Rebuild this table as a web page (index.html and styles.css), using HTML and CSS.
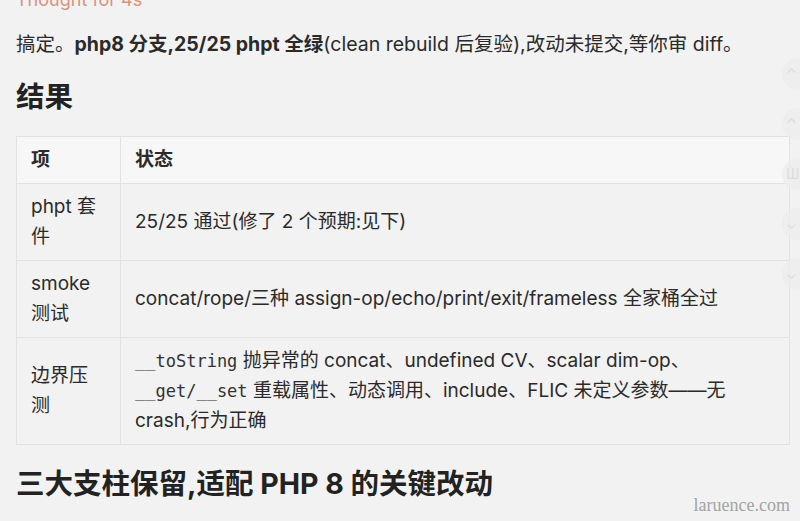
FILE: index.html
```html
<!DOCTYPE html>
<html lang="zh-CN">
<head>
    <meta charset="utf-8">
    <title>结果</title>
    <link rel="stylesheet" href="styles.css">
</head>
<body>
    <div class="chat">
        <div class="thought">Thought for 4s</div>
        <p class="summary">搞定。<b>php8 分支,25/25 phpt 全绿</b>(clean rebuild 后复验),改动未提交,等你审 diff。</p>

        <h2 class="title">结果</h2>

        <table class="result">
            <thead>
                <tr>
                    <th class="col-item">项</th>
                    <th>状态</th>
                </tr>
            </thead>
            <tbody>
                <tr>
                    <td class="col-item">phpt 套件</td>
                    <td>25/25 通过(修了 2 个预期:见下)</td>
                </tr>
                <tr>
                    <td class="col-item">smoke 测试</td>
                    <td>concat/rope/三种 assign-op/echo/print/exit/frameless 全家桶全过</td>
                </tr>
                <tr>
                    <td class="col-item">边界压测</td>
                    <td><code>__toString</code> 抛异常的 concat、undefined CV、scalar dim-op、<code>__get/__set</code> 重载属性、动态调用、include、FLIC 未定义参数——无 crash,行为正确</td>
                </tr>
            </tbody>
        </table>

        <h2 class="title title-next">三大支柱保留,适配 PHP 8 的关键改动</h2>
    </div>

    <!-- faint floating buttons at the right edge -->
    <div class="side-tools">
        <span class="tool">⌃</span>
        <span class="tool">⌃</span>
        <span class="tool">Ш</span>
        <span class="tool">⌄</span>
        <span class="tool">⌄</span>
    </div>

    <div class="watermark">laruence.com</div>
</body>
</html>
```

FILE: styles.css
```css
body {
    margin: 0;
    background: #f2f2f2;
    color: #2a2a2a;
    font-family: Inter, "Noto Sans CJK SC", sans-serif;
    overflow: hidden;
}

.chat {
    padding: 0 10px 0 16px;
}

.thought {
    margin-top: -10px;
    font-size: 18px;
    line-height: 20px;
    color: #dc917a;
}

.summary {
    margin: 19px 0 0;
    font-size: 19.5px;
    line-height: 30px;
}

.summary b {
    font-weight: 700;
}

.title {
    margin: 20px 0 0;
    font-size: 28.5px;
    line-height: 36px;
    font-weight: 700;
    color: #222;
}

.title-next {
    margin-top: 21px;
}

table.result {
    width: 100%;
    margin-top: 21px;
    border-collapse: collapse;
    font-size: 19px;
    line-height: 30px;
}

.result th,
.result td {
    border: 1px solid #e2e2e2;
    padding: 8px 14px;
    text-align: left;
    vertical-align: middle;
}

.result th {
    background: #f7f7f7;
    font-weight: 700;
}

.result .col-item {
    width: 67px;
    padding-right: 22px;
}

.result code {
    font-family: "DejaVu Sans Mono", monospace;
    font-size: 17px;
    color: #333;
}

.side-tools {
    position: absolute;
    top: 58px;
    right: -14px;
    display: flex;
    flex-direction: column;
    gap: 18px;
}

.tool {
    width: 32px;
    height: 32px;
    border-radius: 50%;
    background: rgba(236, 236, 236, 0.8);
    color: #dcdcdc;
    font-size: 14px;
    line-height: 32px;
    text-align: left;
    padding-left: 4px;
    box-sizing: border-box;
}

.watermark {
    position: absolute;
    right: 10px;
    bottom: 5px;
    font-family: "Liberation Serif", serif;
    font-size: 18px;
    color: #a3a3a3;
}
```
